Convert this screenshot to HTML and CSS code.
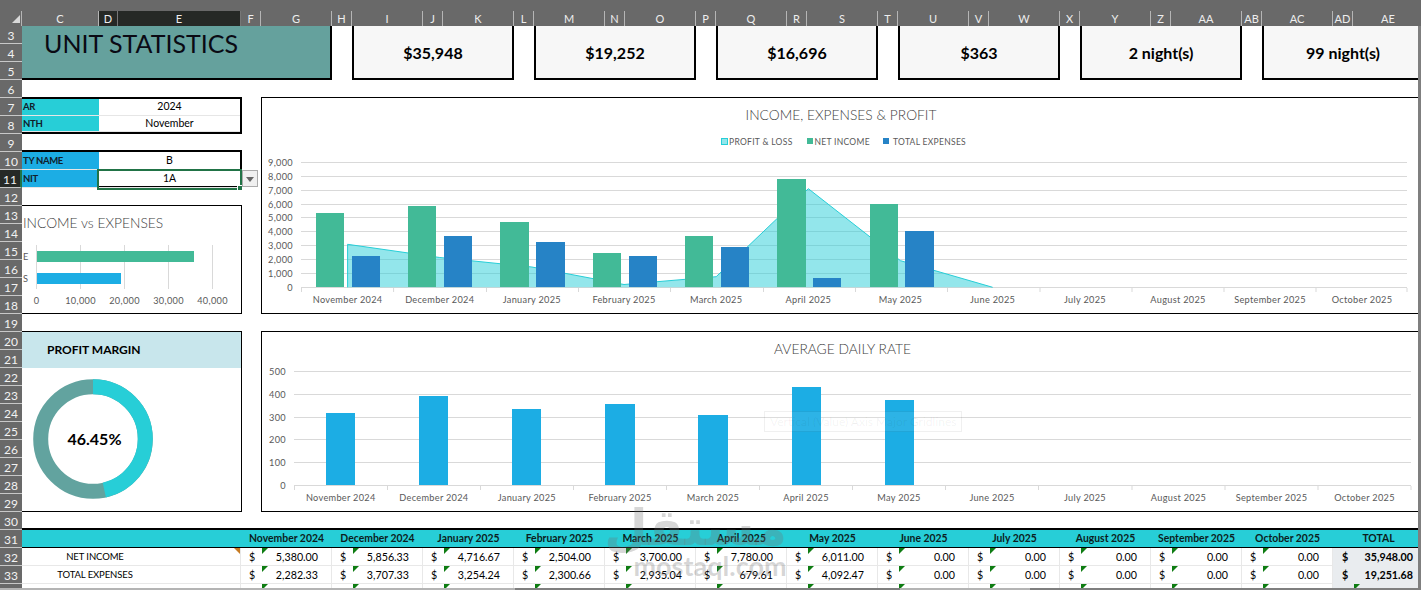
FILE: index.html
```html
<!DOCTYPE html>
<html lang="en">
<head>
    <meta charset="UTF-8">
    <title>Unit Statistics</title>
    <link rel="stylesheet" href="styles.css">
</head>
<body>
    <div class="top-strip"></div>

    <div class="col-heads">
        <div class="corner"><svg width="22" height="15"><polygon points="20,4 20,12 12,12" fill="#d9d9d9"/></svg></div>
        <div>C</div><div class="on">D</div><div class="on">E</div><div>F</div><div>G</div><div>H</div><div>I</div><div>J</div><div>K</div><div>L</div><div>M</div><div>N</div><div>O</div><div>P</div><div>Q</div><div>R</div><div>S</div><div>T</div><div>U</div><div>V</div><div>W</div><div>X</div><div>Y</div><div>Z</div><div>AA</div><div>AB</div><div>AC</div><div>AD</div><div>AE</div>
    </div>

    <div class="main">
        <div class="row-heads">
            <div>3</div><div>4</div><div>5</div><div>6</div><div>7</div><div>8</div><div>9</div><div>10</div><div class="on">11</div><div>12</div><div>13</div><div>14</div><div>15</div><div>16</div><div>17</div><div>18</div><div>19</div><div>20</div><div>21</div><div>22</div><div>23</div><div>24</div><div>25</div><div>26</div><div>27</div><div>28</div><div>29</div><div>30</div><div>31</div><div>32</div><div>33</div><div></div>
        </div>

        <div class="sheet-clip">
            <div class="sheet">
                <div class="title-block">UNIT STATISTICS</div>
                <div class="kpi kpi-1">$35,948</div>
                <div class="kpi kpi-2">$19,252</div>
                <div class="kpi kpi-3">$16,696</div>
                <div class="kpi kpi-4">$363</div>
                <div class="kpi kpi-5">2 night(s)</div>
                <div class="kpi kpi-6">99 night(s)</div>

                <div class="filter filter-date">
                    <div class="filter-label">AR</div><div class="filter-value">2024</div>
                    <div class="filter-label">NTH</div><div class="filter-value">November</div>
                </div>

                <div class="filter filter-unit">
                    <div class="filter-label">TY NAME</div><div class="filter-value">B</div>
                    <div class="filter-label">NIT</div>
                    <div class="filter-value active-cell">1A
                        <span class="selection"><span class="handle"></span></span>
                        <span class="dropdown"></span>
                    </div>
                </div>

                <div class="chart chart-small">
                    <svg width="219" height="107" viewBox="22 206 219 107">
                        <text class="chart-title" x="23" y="228">INCOME vs EXPENSES</text>
                        <path class="grid" d="M36.5 245V289M80.5 245V289M124.5 245V289M168.5 245V289M212.5 245V289"/>
                        <rect x="37" y="251" width="157" height="11" fill="#42ba97"/>
                        <rect x="37" y="273" width="84" height="11" fill="#1cade4"/>
                        <text class="label" x="23" y="260">E</text>
                        <text class="label" x="23" y="282">S</text>
                        <text class="label mid" x="36.5" y="304">0</text>
                        <text class="label mid" x="80.5" y="304">10,000</text>
                        <text class="label mid" x="124.5" y="304">20,000</text>
                        <text class="label mid" x="168.5" y="304">30,000</text>
                        <text class="label mid" x="212.5" y="304">40,000</text>
                    </svg>
                </div>

                <div class="chart chart-income">
                    <svg width="1161" height="215" viewBox="262 98 1161 215">
                        <text class="chart-title mid" x="841" y="120">INCOME, EXPENSES &amp; PROFIT</text>

                        <rect x="721.5" y="138.5" width="6" height="6" fill="#93e6eb" stroke="#27ced7"/>
                        <text class="legend" x="729" y="144.5">PROFIT &amp; LOSS</text>
                        <rect x="807" y="138" width="6" height="6" fill="#42ba97"/>
                        <text class="legend" x="814.5" y="144.5">NET INCOME</text>
                        <rect x="883" y="138" width="6" height="6" fill="#2683c6"/>
                        <text class="legend" x="893" y="144.5">TOTAL EXPENSES</text>

                        <path class="grid" d="M301 162.5H1407M301 176.5H1407M301 190.5H1407M301 204.5H1407M301 217.5H1407M301 231.5H1407M301 245.5H1407M301 259.5H1407M301 273.5H1407M301 287.5H1407"/>
                        <path class="grid" d="M301.5 288V292M393.6 288V292M486.5 288V292M578.5 288V292M670.5 288V292M763.5 288V292M855.5 288V292M947.5 288V292M1040 288V292M1132 288V292M1224 288V292M1316 288V292M1407 288V292"/>

                        <path d="M347.6 287.3L347.6 244.3L439.75 257.5L531.9 267L624 284.5L716.2 276.7L808.35 188.7L900.5 260.7L992.65 287.3" fill="#27ced7" fill-opacity="0.5" stroke="#27ced7"/>

                        <g fill="#42ba97">
                            <rect x="316" y="213" width="28" height="74"/>
                            <rect x="408" y="206" width="28" height="81"/>
                            <rect x="500" y="222" width="29" height="65"/>
                            <rect x="593" y="253" width="28" height="34"/>
                            <rect x="685" y="236" width="28" height="51"/>
                            <rect x="777" y="179" width="29" height="108"/>
                            <rect x="870" y="204" width="28" height="83"/>
                        </g>
                        <g fill="#2683c6">
                            <rect x="352" y="256" width="28" height="31"/>
                            <rect x="444" y="236" width="28" height="51"/>
                            <rect x="536" y="242" width="29" height="45"/>
                            <rect x="629" y="256" width="28" height="31"/>
                            <rect x="721" y="247" width="28" height="40"/>
                            <rect x="813" y="278" width="28" height="9"/>
                            <rect x="905" y="231" width="29" height="56"/>
                        </g>

                        <g class="label end">
                            <text x="293" y="165.5">9,000</text>
                            <text x="293" y="179.5">8,000</text>
                            <text x="293" y="193.5">7,000</text>
                            <text x="293" y="207.5">6,000</text>
                            <text x="293" y="221">5,000</text>
                            <text x="293" y="235">4,000</text>
                            <text x="293" y="249">3,000</text>
                            <text x="293" y="263">2,000</text>
                            <text x="293" y="277">1,000</text>
                            <text x="293" y="291">0</text>
                        </g>
                        <g class="label mid">
                            <text x="347.6" y="303">November 2024</text>
                            <text x="439.75" y="303">December 2024</text>
                            <text x="531.9" y="303">January 2025</text>
                            <text x="624" y="303">February 2025</text>
                            <text x="716.2" y="303">March 2025</text>
                            <text x="808.35" y="303">April 2025</text>
                            <text x="900.5" y="303">May 2025</text>
                            <text x="992.65" y="303">June 2025</text>
                            <text x="1085" y="303">July 2025</text>
                            <text x="1178" y="303">August 2025</text>
                            <text x="1270" y="303">September 2025</text>
                            <text x="1362" y="303">October 2025</text>
                        </g>
                    </svg>
                </div>

                <div class="chart chart-margin">
                    <div class="margin-head">PROFIT MARGIN</div>
                    <svg width="219" height="143" viewBox="22 368 219 143">
                        <circle cx="93" cy="439" r="52.3" fill="none" stroke="#62a39f" stroke-width="15"/>
                        <circle cx="93" cy="439" r="52.3" fill="none" stroke="#27ced7" stroke-width="15" stroke-dasharray="152.6 328.6" transform="rotate(-90 93 439)"/>
                        <text class="donut-value" x="94.5" y="445">46.45%</text>
                    </svg>
                </div>

                <div class="chart chart-rate">
                    <svg width="1161" height="179" viewBox="262 332 1161 179">
                        <text class="chart-title mid" x="842.5" y="354">AVERAGE DAILY RATE</text>
                        <path class="grid" d="M294 371.5H1411M294 394.5H1411M294 417.5H1411M294 439.5H1411M294 462.5H1411M294 485.5H1411"/>
                        <path class="grid" d="M294.5 486V490M387.5 486V490M480.5 486V490M573.5 486V490M666.5 486V490M759.5 486V490M852.5 486V490M945.5 486V490M1038.5 486V490M1132 486V490M1225 486V490M1318 486V490M1411 486V490"/>
                        <g fill="#1cade4">
                            <rect x="326" y="413" width="29" height="72"/>
                            <rect x="419" y="396" width="29" height="89"/>
                            <rect x="512" y="409" width="29" height="76"/>
                            <rect x="605" y="404" width="30" height="81"/>
                            <rect x="698" y="415" width="30" height="70"/>
                            <rect x="792" y="387" width="29" height="98"/>
                            <rect x="885" y="400" width="29" height="85"/>
                        </g>
                        <rect class="ghost-tip" x="764.5" y="411.5" width="197" height="20"/>
                        <text class="ghost-text" x="770" y="426">Vertical (Value) Axis Major Gridlines</text>
                        <g class="label end">
                            <text x="286" y="375">500</text>
                            <text x="286" y="398">400</text>
                            <text x="286" y="421">300</text>
                            <text x="286" y="443">200</text>
                            <text x="286" y="466">100</text>
                            <text x="286" y="489">0</text>
                        </g>
                        <g class="label mid">
                            <text x="340.8" y="501">November 2024</text>
                            <text x="433.9" y="501">December 2024</text>
                            <text x="526.9" y="501">January 2025</text>
                            <text x="620" y="501">February 2025</text>
                            <text x="713" y="501">March 2025</text>
                            <text x="806" y="501">April 2025</text>
                            <text x="899" y="501">May 2025</text>
                            <text x="992" y="501">June 2025</text>
                            <text x="1085" y="501">July 2025</text>
                            <text x="1178.5" y="501">August 2025</text>
                            <text x="1271.5" y="501">September 2025</text>
                            <text x="1364.5" y="501">October 2025</text>
                        </g>
                    </svg>
                </div>

                <div class="summary">
                    <div class="th"></div><div class="th">November 2024</div><div class="th">December 2024</div><div class="th">January 2025</div><div class="th">February 2025</div><div class="th">March 2025</div><div class="th">April 2025</div><div class="th">May 2025</div><div class="th">June 2025</div><div class="th">July 2025</div><div class="th">August 2025</div><div class="th">September 2025</div><div class="th">October 2025</div><div class="th">TOTAL</div>

                    <div class="row-label note">NET INCOME</div>
                    <div class="money flag"><span>$</span><span>5,380.00</span></div>
                    <div class="money flag"><span>$</span><span>5,856.33</span></div>
                    <div class="money flag"><span>$</span><span>4,716.67</span></div>
                    <div class="money flag"><span>$</span><span>2,504.00</span></div>
                    <div class="money flag"><span>$</span><span>3,700.00</span></div>
                    <div class="money flag"><span>$</span><span>7,780.00</span></div>
                    <div class="money flag"><span>$</span><span>6,011.00</span></div>
                    <div class="money flag"><span>$</span><span>0.00</span></div>
                    <div class="money flag"><span>$</span><span>0.00</span></div>
                    <div class="money flag"><span>$</span><span>0.00</span></div>
                    <div class="money flag"><span>$</span><span>0.00</span></div>
                    <div class="money flag"><span>$</span><span>0.00</span></div>
                    <div class="money total"><span>$</span><span>35,948.00</span></div>

                    <div class="row-label">TOTAL EXPENSES</div>
                    <div class="money flag"><span>$</span><span>2,282.33</span></div>
                    <div class="money flag"><span>$</span><span>3,707.33</span></div>
                    <div class="money flag"><span>$</span><span>3,254.24</span></div>
                    <div class="money flag"><span>$</span><span>2,300.66</span></div>
                    <div class="money flag"><span>$</span><span>2,935.04</span></div>
                    <div class="money flag"><span>$</span><span>679.61</span></div>
                    <div class="money flag"><span>$</span><span>4,092.47</span></div>
                    <div class="money flag"><span>$</span><span>0.00</span></div>
                    <div class="money flag"><span>$</span><span>0.00</span></div>
                    <div class="money flag"><span>$</span><span>0.00</span></div>
                    <div class="money flag"><span>$</span><span>0.00</span></div>
                    <div class="money flag"><span>$</span><span>0.00</span></div>
                    <div class="money total"><span>$</span><span>19,251.68</span></div>

                    <div class="row-label"></div>
                    <div class="money flag"></div><div class="money flag"></div><div class="money flag"></div><div class="money flag"></div><div class="money flag"></div><div class="money flag"></div><div class="money flag"></div><div class="money flag"></div><div class="money flag"></div><div class="money flag"></div><div class="money flag"></div><div class="money flag"></div>
                    <div class="money total flag"></div>
                </div>

                <!-- site stamp over the table -->
                <div class="watermark">
                    <div class="watermark-logo" lang="ar" dir="rtl">مستقل</div>
                    <div class="watermark-url">mostaql.com</div>
                </div>
            </div>
        </div>

        <div class="scroll-edge"></div>
    </div>

    <div class="bottom-edge"></div>
</body>
</html>
```

FILE: styles.css
```css
body {
    margin: 0;
    width: 1421px;
    height: 590px;
    overflow: hidden;
    background: #fff;
    font-family: "Lato", "Liberation Sans", sans-serif;
    color: #000;
}

.top-strip {
    height: 11px;
    background: #696969;
}

/* column letters, same widths as the sheet below */
.col-heads {
    display: grid;
    grid-template-columns: 22px 77px 19px 123px repeat(13, 20px 71px);
    height: 15px;
    background: #696969;
    color: #eee;
    font-size: 11px;
    line-height: 15px;
    text-align: center;
    overflow: hidden;
}

.col-heads > div {
    box-sizing: border-box;
    border-right: 1px solid #b5b5b5;
    border-bottom: 1px solid #c8c8c8;
}

.col-heads .on {
    background: #262926;
    border-right-color: #777;
    border-bottom: 2px solid #217346;
}

.main {
    display: flex;
    height: 562px;
}

.row-heads {
    flex: none;
    width: 22px;
    background: #696969;
    color: #f2f2f2;
    font-size: 12px;
    text-align: center;
    overflow: hidden;
}

.row-heads > div {
    box-sizing: border-box;
    height: 18px;
    line-height: 20px;
    border-bottom: 1px solid #c8c8c8;
}

.row-heads .on {
    background: #262926;
    border-right: 2px solid #217346;
}

.sheet-clip {
    flex: none;
    width: 1396px;
    overflow: hidden;
}

.sheet {
    position: relative;
    display: grid;
    grid-template-columns: 77px 19px 123px repeat(13, 20px 71px);
    grid-auto-rows: 18px;
    width: 1402px;
}

.scroll-edge {
    flex: 1;
    background: #7f7f7f;
}

.bottom-edge {
    height: 2px;
    background: linear-gradient(90deg, #b4b4b4 515px, #7f7f7f 515px, #7f7f7f 900px, #b4b4b4 900px, #b4b4b4 1030px, #7f7f7f 1030px);
}

.title-block {
    grid-column: 1 / 6;
    grid-row: 1 / 4;
    box-sizing: border-box;
    padding: 0 0 0 22px;
    background: #65a19d;
    border-right: 2px solid #000;
    border-bottom: 2px solid #000;
    font-size: 25px;
    line-height: 35px;
    color: #0a0a14;
}

.kpi {
    grid-row: 1 / 4;
    display: flex;
    align-items: center;
    justify-content: center;
    box-sizing: border-box;
    background: #f7f7f7;
    border: 2px solid #000;
    border-top: 0;
    font-size: 16px;
    font-weight: 700;
}

.kpi-1 { grid-column: 7 / 10; }
.kpi-2 { grid-column: 11 / 14; }
.kpi-3 { grid-column: 15 / 18; }
.kpi-4 { grid-column: 19 / 22; }
.kpi-5 { grid-column: 23 / 26; }
.kpi-6 { grid-column: 27 / 30; }

.filter {
    grid-column: 1 / 4;
    display: grid;
    grid-template-columns: 77px 1fr;
    grid-auto-rows: 1fr;
    margin: -1px -1px 0 0;
    border: 2px solid #000;
    border-left: 0;
    font-size: 10.5px;
    line-height: 15px;
}

.filter-date { grid-row: 5 / 7; }
.filter-unit { grid-row: 8 / 10; margin-top: -2px; line-height: 17px; }

.filter-label {
    padding-left: 1px;
    font-size: 9.5px;
    font-weight: 700;
    letter-spacing: -0.3px;
    color: #10202a;
}

.filter-date .filter-label {
    background: #27ced7;
    border-bottom: 1px solid #e6e6e6;
}

.filter-unit .filter-label {
    background: #1cade4;
    border-bottom: 1px solid #e6e6e6;
}

.filter-value {
    position: relative;
    text-align: center;
    border-bottom: 1px solid #e6e6e6;
}

.selection {
    position: absolute;
    top: -1px;
    left: -2px;
    right: -2px;
    bottom: -3px;
    border: 2px solid #217346;
}

.handle {
    position: absolute;
    right: -3px;
    bottom: -3px;
    width: 4px;
    height: 4px;
    background: #217346;
    border: 1px solid #fff;
}

.dropdown {
    position: absolute;
    top: 0;
    left: calc(100% + 2px);
    width: 14px;
    height: 15px;
    background: #f0f0f0;
    border: 1px solid #ababab;
}

.dropdown::after {
    content: "";
    position: absolute;
    top: 6px;
    left: 3px;
    border-left: 4px solid transparent;
    border-right: 4px solid transparent;
    border-top: 5px solid #666;
}

.chart {
    margin-top: -1px;
    border: 1px solid #000;
    background: #fff;
}

.chart svg {
    display: block;
}

.chart-small,
.chart-margin {
    grid-column: 1 / 4;
    margin-right: -1px;
    border-left: 0;
}

.chart-income,
.chart-rate {
    grid-column: 5 / 30;
}

.chart-small { grid-row: 11 / 17; }
.chart-income { grid-row: 5 / 17; }
.chart-margin,
.chart-rate { grid-row: 18 / 28; }

.chart-title {
    font-size: 13.8px;
    font-weight: 300;
    fill: #404040;
}

.label {
    font-size: 9.2px;
    letter-spacing: 0.3px;
    fill: #595959;
}

.legend {
    font-size: 8.5px;
    letter-spacing: 0.3px;
    fill: #595959;
}

.mid {
    text-anchor: middle;
}

.end {
    text-anchor: end;
}

.grid {
    fill: none;
    stroke: #d9d9d9;
}

.margin-head {
    height: 36px;
    padding-left: 25px;
    background: #c8e6ec;
    font-size: 12px;
    font-weight: 700;
    line-height: 36px;
}

.donut-value {
    font-size: 16px;
    font-weight: 700;
    text-anchor: middle;
}

.ghost-tip {
    fill: #fff;
    fill-opacity: 0.08;
    stroke: #000;
    stroke-opacity: 0.06;
}

.ghost-text {
    font-size: 12px;
    fill: #000;
    fill-opacity: 0.06;
}

.summary {
    grid-column: 1 / 30;
    grid-row: 29 / 33;
    display: grid;
    grid-template-columns: 219px repeat(13, 91px);
    grid-auto-rows: 18px;
    margin-top: -2px;
    border-top: 2px solid #000;
    font-size: 10.7px;
    line-height: 18px;
}

.th {
    background: #27ced7;
    border-bottom: 1px solid #000;
    font-size: 10.4px;
    font-weight: 700;
    line-height: 16px;
    text-align: center;
    color: #0c1c20;
}

.row-label,
.money {
    position: relative;
    box-sizing: border-box;
    border-right: 1px solid #e8e8e8;
    border-bottom: 1px solid #e8e8e8;
}

.row-label {
    padding-right: 72px;
    font-size: 9.5px;
    letter-spacing: -0.1px;
    text-align: center;
}

.money {
    display: flex;
    justify-content: space-between;
    padding: 0 13px 0 8px;
}

.flag::before {
    content: "";
    position: absolute;
    top: 0;
    left: 21px;
    border-top: 6px solid #0e7c12;
    border-right: 6px solid transparent;
}

.note::after {
    content: "";
    position: absolute;
    top: 0;
    right: 0;
    border-top: 6px solid #c77b22;
    border-left: 6px solid transparent;
}

.total {
    padding: 0 10px 0 9px;
    background: #e9ecef;
    font-weight: 700;
    border-color: #e9ecef;
}

.watermark {
    position: absolute;
    left: 611px;
    top: 476px;
    width: 154px;
    color: rgba(110, 110, 110, 0.28);
    text-align: center;
    pointer-events: none;
}

.watermark-logo {
    font-family: "DejaVu Sans", sans-serif;
    font-size: 50px;
    font-weight: 700;
    line-height: 52px;
}

.watermark-url {
    font-size: 27px;
    font-weight: 700;
    line-height: 24px;
}
```
